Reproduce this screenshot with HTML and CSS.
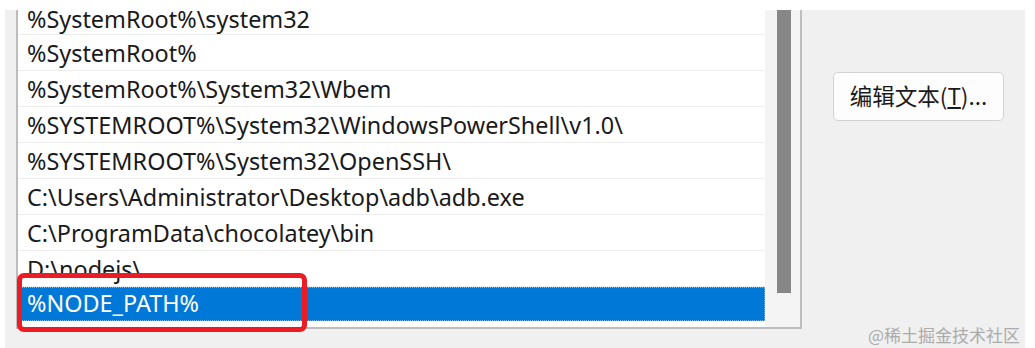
FILE: index.html
```html
<!DOCTYPE html>
<html lang="zh-CN">
<head>
    <meta charset="UTF-8">
    <title>编辑环境变量</title>
    <link rel="stylesheet" href="styles.css">
</head>
<body>

    <!-- Dialog panel with the path list -->
    <div class="panel">
        <div class="path-list">
            <div class="rows">
                <div class="row first">%SystemRoot%\system32</div>
                <div class="row">%SystemRoot%</div>
                <div class="row">%SystemRoot%\System32\Wbem</div>
                <div class="row">%SYSTEMROOT%\System32\WindowsPowerShell\v1.0\</div>
                <div class="row">%SYSTEMROOT%\System32\OpenSSH\</div>
                <div class="row">C:\Users\Administrator\Desktop\adb\adb.exe</div>
                <div class="row">C:\ProgramData\chocolatey\bin</div>
                <div class="row">D:\nodejs\</div>
                <div class="row selected">%NODE_PATH%</div>
            </div>
            <div class="scrollbar">
                <div class="thumb"></div>
            </div>
        </div>

        <div class="side">
            <button class="edit-button">编辑文本(<u>T</u>)...</button>
        </div>

        <!-- Red highlight around the selected entry -->
        <div class="highlight"></div>
    </div>

    <div class="watermark">@稀土掘金技术社区</div>

</body>
</html>
```

FILE: styles.css
```css
/* Base */
body {
    margin: 0;
    background: #ffffff;
    font-family: 'Noto Sans', 'Noto Sans CJK SC', sans-serif;
    color: #1a1a1a;
    overflow: hidden;
}

/* Grey dialog area */
.panel {
    position: relative;
    display: flex;
    margin: 10px 10px 0 5px;
    padding-left: 11px;
    height: 338px;
    background: #f0f0f0;
}

/* List box */
.path-list {
    display: flex;
    width: 786px;
    height: 319px;
    box-sizing: border-box;
    border: 2px solid #bdbdbd;
    border-top: none;
    background: #ffffff;
    overflow: hidden;
}

.rows {
    flex: 1;
}

.row {
    height: 36px;
    box-sizing: border-box;
    padding: 1px 0 0 9px;
    border-bottom: 1px solid #ededed;
    font-size: 23.4px;
    line-height: 34px;
    white-space: nowrap;
}

/* first entry is scrolled half out of view */
.row.first {
    height: 25px;
    padding-top: 1px;
    line-height: 16px;
}

.row.selected {
    height: 34px;
    line-height: 33px;
    padding-top: 0;
    border-bottom: none;
    background: #0078d7;
    color: #ffffff;
    outline: 1px dotted rgba(255, 255, 255, 0.45);
    outline-offset: -1px;
}

/* Scrollbar */
.scrollbar {
    width: 35px;
    background: #f4f4f4;
    padding-left: 12px;
    box-sizing: border-box;
}

.thumb {
    width: 14px;
    height: 283px;
    background: #878787;
}

/* Right side button */
.side {
    padding-left: 31px;
    padding-top: 62px;
}

.edit-button {
    width: 171px;
    height: 49px;
    background: #fdfdfd;
    border: 1px solid #d3d3d3;
    border-radius: 5px;
    font-family: 'Noto Sans CJK SC', sans-serif;
    font-size: 22.5px;
    line-height: 1;
    color: #1a1a1a;
    padding: 0 0 2px;
}

.edit-button u {
    text-underline-offset: 2px;
}

/* Annotation box */
.highlight {
    position: absolute;
    left: 12px;
    top: 263px;
    width: 290px;
    height: 59px;
    box-sizing: border-box;
    border: 5px solid #ec1c24;
    border-radius: 7px;
}

/* Watermark */
.watermark {
    position: absolute;
    left: 868px;
    top: 322px;
    font-family: 'Noto Sans CJK SC', sans-serif;
    font-size: 17px;
    color: #ababab;
}
```
